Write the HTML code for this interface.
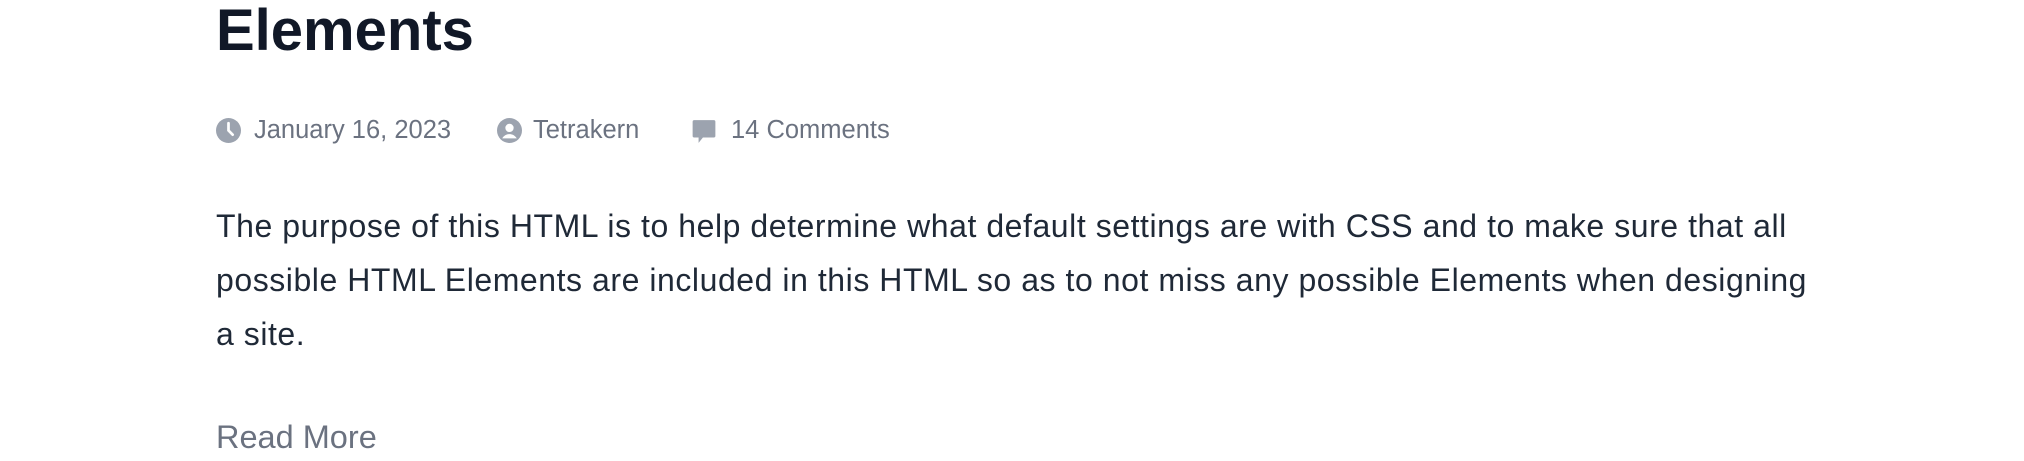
<!DOCTYPE html>
<html><head><meta charset="utf-8"><style>
html,body{margin:0;padding:0;background:#fff;width:2024px;height:461px;overflow:hidden;font-family:"Liberation Sans",sans-serif}
.wrap{position:absolute;left:216px;top:0;width:1700px}
h1{position:absolute;left:0;top:-4px;margin:0;font-size:58px;font-weight:bold;color:#111827;line-height:70px;white-space:nowrap}
.meta{position:absolute;top:115px;left:0;font-size:25.5px;letter-spacing:0px;color:#6b7280;white-space:nowrap;height:30px;line-height:30px}
.meta span{position:absolute;top:0}
.meta svg{position:absolute;top:3px}
p{position:absolute;left:0;top:199px;margin:0;font-size:32px;letter-spacing:0.55px;line-height:54px;color:#1f2937;white-space:nowrap}
.rm{position:absolute;left:0;top:417px;font-size:32.5px;color:#6b7280;line-height:40px}
</style></head><body><div class="wrap">
<h1>Elements</h1>
<div class="meta">
<svg style="left:0" width="25" height="25" viewBox="0 0 24 24"><circle cx="12" cy="12" r="12" fill="#9ca3af"/><path d="M12 5v7l4 4" stroke="#fff" stroke-width="2.6" fill="none" stroke-linecap="round"/></svg>
<span style="left:38px">January 16, 2023</span>
<svg style="left:281px" width="25" height="25" viewBox="0 0 24 24"><circle cx="12" cy="12" r="12" fill="#9ca3af"/><circle cx="12" cy="9.5" r="4" fill="#fff"/><path d="M5 19.5c2-3 4.5-4 7-4s5 1 7 4" fill="#fff"/></svg>
<span style="left:317px">Tetrakern</span>
<svg style="left:475px" width="26" height="26" viewBox="0 0 24 24"><path d="M3 2h18a1.5 1.5 0 0 1 1.5 1.5v13A1.5 1.5 0 0 1 21 18H11l-4 5v-5H3a1.5 1.5 0 0 1-1.5-1.5v-13A1.5 1.5 0 0 1 3 2z" fill="#9ca3af"/></svg>
<span style="left:515px">14 Comments</span>
</div>
<p>The purpose of this HTML is to help determine what default settings are with CSS and to make sure that all<br>possible HTML Elements are included in this HTML so as to not miss any possible Elements when designing<br>a site.</p>
<div class="rm">Read More</div>
</div></body></html>
